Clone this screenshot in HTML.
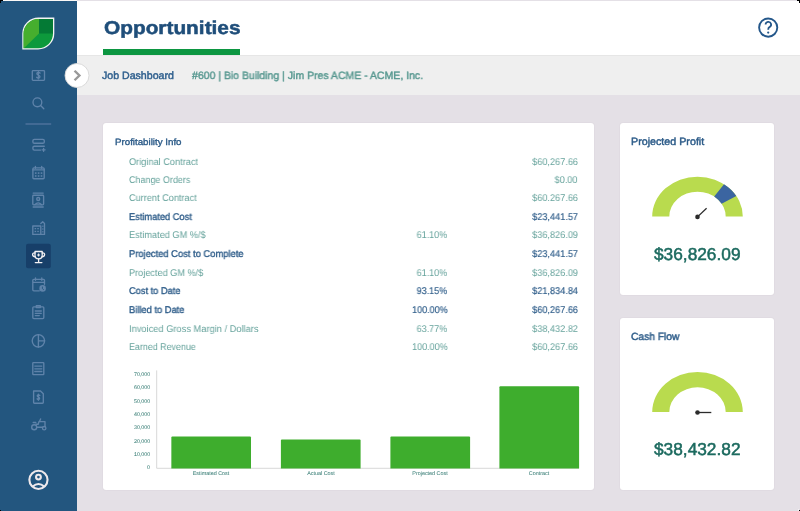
<!DOCTYPE html>
<html><head><meta charset="utf-8">
<style>
*{margin:0;padding:0;box-sizing:border-box}
html,body{width:800px;height:511px;overflow:hidden;background:#e4e0e6;font-family:"Liberation Sans",sans-serif}
.abs{position:absolute}
.t{position:absolute;white-space:nowrap;line-height:1;text-rendering:geometricPrecision;will-change:transform}
.card{position:absolute;background:#fff;border-radius:3px;box-shadow:0 0 1.5px rgba(60,40,70,0.10)}
svg{position:absolute;left:0;top:0;overflow:visible}
</style></head><body>
<!-- top strip -->
<div class="abs" style="left:0;top:0;width:77px;height:1px;background:#fbf9f7"></div>
<!-- sidebar -->
<div class="abs" style="left:0;top:1px;width:77px;height:510px;background:#23567f"></div>
<!-- header -->
<div class="abs" style="left:77px;top:1px;width:723px;height:54px;background:#fff"></div>
<div class="abs" style="left:77px;top:54.6px;width:723px;height:40.9px;background:#efefef"></div>
<div class="abs" style="left:77px;top:54.6px;width:723px;height:1px;background:#e6e6e6"></div>
<div class="abs" style="left:103.2px;top:49.4px;width:137.1px;height:5.4px;background:#0c9641"></div>

<!-- cards -->
<div class="card" style="left:103px;top:122.7px;width:490.7px;height:367.2px"></div>
<div class="card" style="left:620.1px;top:122.7px;width:153.6px;height:172px"></div>
<div class="card" style="left:620.1px;top:318px;width:153.6px;height:171.9px"></div>

<svg width="800" height="511" viewBox="0 0 800 511">
  <!-- logo -->
  <g>
    <path d="M22.3 49.5 V33.5 A16.2 15.9 0 0 1 38.5 17.6 H54.3 V33.6 A16.2 15.9 0 0 1 38.1 49.5 Z" fill="#f4f4f4"/>
    <clipPath id="leaf"><path d="M23.6 48.2 V33.5 A14.9 14.6 0 0 1 38.5 18.9 H53 V33.6 A14.9 14.6 0 0 1 38.1 48.2 Z"/></clipPath>
    <g clip-path="url(#leaf)">
      <rect x="20" y="15" width="40" height="40" fill="#0d993c"/>
      <path d="M20 15 L39 15 L39 33.5 L20 52 Z" fill="#46ae2e"/>
      <rect x="39" y="15" width="20" height="18.5" fill="#047a35"/>
    </g>
  </g>

  <!-- chevron button -->
  <circle cx="77" cy="75.5" r="12" fill="#fff" stroke="#d6d6d6" stroke-width="0.9"/>
  <path d="M75.4 71.6 L79.4 75.5 L75.4 79.4" fill="none" stroke="#999999" stroke-width="2.4" stroke-linecap="square"/>

  <!-- help icon -->
  <circle cx="768.2" cy="27.6" r="9.1" fill="none" stroke="#24578a" stroke-width="1.9"/>
  <path d="M765.6 24.6 A2.75 2.75 0 1 1 769.5 27.1 Q768.2 27.9 768.2 29.7" fill="none" stroke="#24578a" stroke-width="1.8"/>
  <circle cx="768.2" cy="32.6" r="1.1" fill="#24578a"/>

  <!-- sidebar icons -->
  <g fill="none" stroke="#5f83aa" stroke-width="1.35" stroke-linecap="round" stroke-linejoin="round">
    <!-- $ bill -->
    <rect x="32.3" y="70.6" width="12.2" height="9.8" rx="0.8"/>
    <path d="M40.1 73.1 Q39.6 72.4 38.4 72.4 Q36.8 72.5 36.9 73.7 Q37 74.7 38.4 75.2 Q40 75.7 40 76.8 Q39.9 78.1 38.4 78.1 Q37.2 78.1 36.7 77.3 M38.4 71.6 V78.9"/>
    <!-- search -->
    <circle cx="37.4" cy="102.3" r="4.4"/>
    <path d="M40.6 105.5 L43.8 108.7"/>
    <!-- list add -->
    <rect x="32.9" y="139.4" width="11.4" height="3.9" rx="1.4"/>
    <path d="M44.3 146.2 H34.3 Q32.9 146.2 32.9 147.6 V148.6 Q32.9 150.1 34.3 150.1 H40.6 M43.6 148.3 V151.3 M42.1 149.8 H45.1"/>
    <!-- calendar -->
    <rect x="32.9" y="167.9" width="11.3" height="10.9" rx="1"/>
    <path d="M32.9 169.9 H44.2 M35.4 166.4 V168.2 M41.7 166.4 V168.2"/>
  </g>
  <g fill="#5f83aa">
    <rect x="34.9" y="172.3" width="1.6" height="1.6"/><rect x="37.8" y="172.3" width="1.6" height="1.6"/><rect x="40.7" y="172.3" width="1.6" height="1.6"/>
    <rect x="34.9" y="175.2" width="1.6" height="1.6"/><rect x="37.8" y="175.2" width="1.6" height="1.6"/><rect x="40.7" y="175.2" width="1.6" height="1.6"/>
  </g>
  <g fill="none" stroke="#5f83aa" stroke-width="1.35" stroke-linecap="round" stroke-linejoin="round">
    <!-- contact -->
    <path d="M33.2 193.1 H43.2 M33.2 207 H43.2"/>
    <rect x="32.8" y="195.2" width="10.8" height="9.6" rx="0.8"/>
    <circle cx="38.2" cy="199" r="1.5"/>
    <path d="M34.8 204.6 Q38.2 201 41.6 204.6"/>
    <!-- building -->
    <path d="M32.8 226 H40.8 V234.4 H32.8 Z M40.8 223.6 L42.7 221.8 L44.5 223.4 V234.4 H40.8"/>
  </g>
  <g fill="#5f83aa">
    <rect x="34.6" y="228" width="1.5" height="1.3"/><rect x="37.3" y="228" width="1.5" height="1.3"/>
    <rect x="34.6" y="230.8" width="1.5" height="1.3"/><rect x="37.3" y="230.8" width="1.5" height="1.3"/>
    <rect x="42.2" y="225.6" width="1.3" height="1.2"/><rect x="42.2" y="228.4" width="1.3" height="1.2"/><rect x="42.2" y="231.2" width="1.3" height="1.2"/>
  </g>
  <g fill="none" stroke="#5f83aa" stroke-width="1.35" stroke-linecap="round" stroke-linejoin="round">
    <!-- calendar clock -->
    <path d="M39.3 290.8 H33.8 Q32.8 290.8 32.8 289.8 V280.3 Q32.8 279.3 33.8 279.3 H43.5 Q44.5 279.3 44.5 280.3 V284.3 M32.8 282.3 H44.5 M35.5 277.9 V280.3 M41.8 277.9 V280.3"/>
  </g>
  <circle cx="42.6" cy="288.4" r="3.3" fill="#5f83aa"/>
  <path d="M42.4 286.6 V288.6 L43.8 289.8" fill="none" stroke="#23567f" stroke-width="0.9"/>
  <g fill="none" stroke="#5f83aa" stroke-width="1.35" stroke-linecap="round" stroke-linejoin="round">
    <!-- clipboard -->
    <rect x="32.8" y="306.8" width="11" height="11.8" rx="1"/>
    <path d="M36.3 305.6 H40.3 V307.6 H36.3 Z M35.3 311 H41.3 M35.3 313.3 H41.3 M35.3 315.6 H39.3"/>
    <!-- pie -->
    <circle cx="38.4" cy="340.8" r="6.2"/>
    <path d="M38.4 334.6 V347 M38.4 340.8 H44.6"/>
    <!-- receipt list -->
    <rect x="32.8" y="362.6" width="11" height="12" rx="0.6"/>
    <path d="M34.8 366.1 H41.8 M34.8 368.8 H41.8 M34.8 371.5 H41.8"/>
    <!-- doc $ -->
    <path d="M33.6 391 V402.4 Q33.6 403.2 34.4 403.2 H42.5 Q43.3 403.2 43.3 402.4 V393.8 L40.5 391 Z"/>
    <path d="M39.8 395.5 Q39.3 394.9 38.4 394.9 Q37.2 395 37.3 396 Q37.4 396.7 38.4 397.1 Q39.6 397.5 39.6 398.4 Q39.5 399.4 38.4 399.4 Q37.5 399.4 37.1 398.8 M38.4 394.2 V400.2"/>
    <!-- tractor -->
    <circle cx="34.2" cy="427.2" r="2.5"/>
    <circle cx="44.2" cy="428.2" r="1.7"/>
    <path d="M36.7 427.2 H42.5 M36 424.2 H38.3 L38.9 421.6 H45 V426.5 M33.2 422.5 H35.8 M40.6 418.9 L39.6 421.3"/>
  </g>
  <!-- active trophy -->
  <rect x="26" y="243.7" width="24.8" height="24.6" rx="2" fill="#173f69"/>
  <g fill="none" stroke="#f4f1f3" stroke-width="1.3" stroke-linecap="round" stroke-linejoin="round">
    <path d="M35 251.5 H42.2 V255.5 Q42.2 258.8 38.6 258.8 Q35 258.8 35 255.5 Z"/>
    <path d="M35 253 Q32.5 252.6 32.6 254.6 Q32.8 256.6 35.4 256.8 M42.2 253 Q44.7 252.6 44.6 254.6 Q44.4 256.6 41.8 256.8"/>
    <path d="M38.6 258.8 V262.3 M35.3 262.6 H41.9"/>
  </g>
  <path d="M38.6 253.5 V256.5 M37.1 255 H40.1" stroke="#f4f1f3" stroke-width="1"/>
  <!-- user -->
  <g fill="none" stroke="#efe9ec" stroke-width="2.1">
    <circle cx="38.45" cy="479.85" r="9.1"/>
    <circle cx="38.45" cy="477.1" r="2.4"/>
    <path d="M32.6 486.6 Q38.45 481.4 44.3 486.6"/>
  </g>
  <!-- divider -->
  <path d="M25.5 124 H51.2" stroke="#4a709a" stroke-width="1.6"/>

  <!-- chart -->
  <path d="M156.7 370.4 V468.3 H579" fill="none" stroke="#d4d4d4" stroke-width="0.9"/>
  <g fill="#3ead2d">
    <path d="M171.35 468.6 V437.6 Q171.35 436.6 172.35 436.6 H250 Q251 436.6 251 437.6 V468.6 Z"/>
    <path d="M280.9 468.6 V440.4 Q280.9 439.4 281.9 439.4 H359.6 Q360.6 439.4 360.6 440.4 V468.6 Z"/>
    <path d="M390.4 468.6 V437.6 Q390.4 436.6 391.4 436.6 H469.1 Q470.1 436.6 470.1 437.6 V468.6 Z"/>
    <path d="M499.4 468.6 V387.2 Q499.4 386.2 500.4 386.2 H578.1 Q579.1 386.2 579.1 387.2 V468.6 Z"/>
  </g>

  <!-- gauge 1 -->
  <path d="M652.2 216.6 A45.3 40 0 0 1 742.8 216.6 L725.7 216.6 A28.2 24.9 0 0 0 669.3 216.6 Z" fill="#b9db4e"/>
  <path d="M724 184.2 A45.3 40 0 0 1 736.3 196 L721.6 203.8 A28.2 24.9 0 0 0 714.2 196.4 Z" fill="#3b65a1"/>
  <path d="M697.5 216.9 L706.6 208.3" stroke="#2b2b2b" stroke-width="1.3"/>
  <circle cx="697.5" cy="216.9" r="2.3" fill="#2b2b2b"/>
  <!-- gauge 2 -->
  <path d="M652.2 412.1 A45.3 40.2 0 0 1 742.8 412.1 L725.7 412.1 A28.2 24.8 0 0 0 669.3 412.1 Z" fill="#b9db4e"/>
  <path d="M697.5 412.5 L711.3 412.5" stroke="#2b2b2b" stroke-width="1.3"/>
  <circle cx="697.5" cy="412.5" r="2.3" fill="#2b2b2b"/>
</svg>
<div class="abs" style="left:0;top:0;width:3px;height:1px;background:#000"></div>
<div class="abs" style="left:0;top:1px;width:1px;height:2px;background:#000"></div>
<div class="abs" style="left:797px;top:0;width:3px;height:1px;background:#000"></div>
<div class="abs" style="left:799px;top:1px;width:1px;height:2px;background:#000"></div>
<div class="abs" style="left:0;top:510px;width:1px;height:1px;background:#000"></div>
<div class="abs" style="left:798px;top:509px;width:1px;height:2px;background:#f4f2f5"></div>
<div class="abs" style="left:799px;top:510px;width:1px;height:1px;background:#000"></div>
<div class="t" style="left:103.60px;top:19.15px;font-size:18.6px;color:#1f4e7a;font-weight:bold;transform:scaleX(1.120);transform-origin:left top;-webkit-text-stroke:0.5px #1f4e7a;">Opportunities</div>
<div class="t" style="left:101.90px;top:70.62px;font-size:10.6px;color:#30608e;-webkit-text-stroke:0.35px #30608e;-webkit-text-stroke:0.45px #30608e;">Job Dashboard</div>
<div class="t" style="left:191.70px;top:70.82px;font-size:10.6px;color:#55978f;-webkit-text-stroke:0.35px #55978f;transform:scaleX(0.990);transform-origin:left top;-webkit-text-stroke:0.4px #55978f;">#600 | Bio Building | Jim Pres ACME - ACME, Inc.</div>
<div class="t" style="left:114.50px;top:137.70px;font-size:9.1px;color:#2c5b88;-webkit-text-stroke:0.35px #2c5b88;transform:scaleX(1.070);transform-origin:left top;">Profitability Info</div>
<div class="t" style="left:128.80px;top:157.50px;font-size:9.8px;color:#66a39c;transform:scaleX(0.939);transform-origin:left top;">Original Contract</div>
<div class="t" style="right:222.00px;top:157.50px;font-size:9.8px;color:#66a39c;transform:scaleX(0.936);transform-origin:right top;">$60,267.66</div>
<div class="t" style="left:128.80px;top:175.60px;font-size:9.8px;color:#66a39c;transform:scaleX(0.916);transform-origin:left top;">Change Orders</div>
<div class="t" style="right:222.00px;top:175.60px;font-size:9.8px;color:#66a39c;transform:scaleX(0.936);transform-origin:right top;">$0.00</div>
<div class="t" style="left:128.80px;top:193.70px;font-size:9.8px;color:#66a39c;transform:scaleX(0.935);transform-origin:left top;">Current Contract</div>
<div class="t" style="right:222.00px;top:193.70px;font-size:9.8px;color:#66a39c;transform:scaleX(0.936);transform-origin:right top;">$60.267.66</div>
<div class="t" style="left:128.50px;top:212.90px;font-size:9.8px;color:#2c5b88;-webkit-text-stroke:0.35px #2c5b88;transform:scaleX(0.946);transform-origin:left top;">Estimated Cost</div>
<div class="t" style="right:222.00px;top:212.90px;font-size:9.8px;color:#2c5b88;transform:scaleX(0.936);transform-origin:right top;-webkit-text-stroke:0.15px #2c5b88;">$23,441.57</div>
<div class="t" style="left:128.80px;top:231.20px;font-size:9.8px;color:#66a39c;transform:scaleX(0.938);transform-origin:left top;">Estimated GM %/$</div>
<div class="t" style="right:352.80px;top:231.20px;font-size:9.8px;color:#66a39c;transform:scaleX(0.921);transform-origin:right top;">61.10%</div>
<div class="t" style="right:222.00px;top:231.20px;font-size:9.8px;color:#66a39c;transform:scaleX(0.936);transform-origin:right top;">$36,826.09</div>
<div class="t" style="left:128.50px;top:250.40px;font-size:9.8px;color:#2c5b88;-webkit-text-stroke:0.35px #2c5b88;transform:scaleX(0.956);transform-origin:left top;">Projected Cost to Complete</div>
<div class="t" style="right:222.00px;top:250.40px;font-size:9.8px;color:#2c5b88;transform:scaleX(0.936);transform-origin:right top;-webkit-text-stroke:0.15px #2c5b88;">$23,441.57</div>
<div class="t" style="left:128.80px;top:268.50px;font-size:9.8px;color:#66a39c;transform:scaleX(0.935);transform-origin:left top;">Projected GM %/$</div>
<div class="t" style="right:352.80px;top:268.50px;font-size:9.8px;color:#66a39c;transform:scaleX(0.921);transform-origin:right top;">61.10%</div>
<div class="t" style="right:222.00px;top:268.50px;font-size:9.8px;color:#66a39c;transform:scaleX(0.936);transform-origin:right top;">$36,826.09</div>
<div class="t" style="left:128.50px;top:287.40px;font-size:9.8px;color:#2c5b88;-webkit-text-stroke:0.35px #2c5b88;transform:scaleX(0.946);transform-origin:left top;">Cost to Date</div>
<div class="t" style="right:352.80px;top:287.40px;font-size:9.8px;color:#2c5b88;transform:scaleX(0.921);transform-origin:right top;-webkit-text-stroke:0.15px #2c5b88;">93.15%</div>
<div class="t" style="right:222.00px;top:287.40px;font-size:9.8px;color:#2c5b88;transform:scaleX(0.936);transform-origin:right top;-webkit-text-stroke:0.15px #2c5b88;">$21,834.84</div>
<div class="t" style="left:128.50px;top:305.70px;font-size:9.8px;color:#2c5b88;-webkit-text-stroke:0.35px #2c5b88;transform:scaleX(0.951);transform-origin:left top;">Billed to Date</div>
<div class="t" style="right:352.80px;top:305.70px;font-size:9.8px;color:#2c5b88;transform:scaleX(0.921);transform-origin:right top;-webkit-text-stroke:0.15px #2c5b88;">100.00%</div>
<div class="t" style="right:222.00px;top:305.70px;font-size:9.8px;color:#2c5b88;transform:scaleX(0.936);transform-origin:right top;-webkit-text-stroke:0.15px #2c5b88;">$60,267.66</div>
<div class="t" style="left:128.80px;top:325.10px;font-size:9.8px;color:#66a39c;transform:scaleX(0.948);transform-origin:left top;">Invoiced Gross Margin / Dollars</div>
<div class="t" style="right:352.80px;top:325.10px;font-size:9.8px;color:#66a39c;transform:scaleX(0.921);transform-origin:right top;">63.77%</div>
<div class="t" style="right:222.00px;top:325.10px;font-size:9.8px;color:#66a39c;transform:scaleX(0.936);transform-origin:right top;">$38,432.82</div>
<div class="t" style="left:128.80px;top:343.40px;font-size:9.8px;color:#66a39c;transform:scaleX(0.908);transform-origin:left top;">Earned Revenue</div>
<div class="t" style="right:352.80px;top:343.40px;font-size:9.8px;color:#66a39c;transform:scaleX(0.921);transform-origin:right top;">100.00%</div>
<div class="t" style="right:222.00px;top:343.40px;font-size:9.8px;color:#66a39c;transform:scaleX(0.936);transform-origin:right top;">$60,267.66</div>
<div class="t" style="left:630.90px;top:136.71px;font-size:10.5px;color:#2c5b88;-webkit-text-stroke:0.35px #2c5b88;transform:scaleX(1.020);transform-origin:left top;-webkit-text-stroke:0.45px #2c5b88;">Projected Profit</div>
<div class="t" style="left:630.70px;top:332.21px;font-size:10.5px;color:#2c5b88;-webkit-text-stroke:0.35px #2c5b88;transform:scaleX(0.975);transform-origin:left top;-webkit-text-stroke:0.45px #2c5b88;">Cash Flow</div>
<div class="t" style="left:653.80px;top:246.45px;font-size:17.3px;color:#1c6a5f;-webkit-text-stroke:0.5px #1c6a5f;">$36,826.09</div>
<div class="t" style="left:653.80px;top:441.45px;font-size:17.3px;color:#1c6a5f;-webkit-text-stroke:0.5px #1c6a5f;">$38,432.82</div>
<div class="t" style="right:649.60px;top:373.01px;font-size:5.3px;color:#3f817a;-webkit-text-stroke:0.05px #3f817a;">70,000</div>
<div class="t" style="right:649.60px;top:386.32px;font-size:5.3px;color:#3f817a;-webkit-text-stroke:0.05px #3f817a;">60,000</div>
<div class="t" style="right:649.60px;top:399.63px;font-size:5.3px;color:#3f817a;-webkit-text-stroke:0.05px #3f817a;">50,000</div>
<div class="t" style="right:649.60px;top:412.94px;font-size:5.3px;color:#3f817a;-webkit-text-stroke:0.05px #3f817a;">40,000</div>
<div class="t" style="right:649.60px;top:426.25px;font-size:5.3px;color:#3f817a;-webkit-text-stroke:0.05px #3f817a;">30,000</div>
<div class="t" style="right:649.60px;top:439.56px;font-size:5.3px;color:#3f817a;-webkit-text-stroke:0.05px #3f817a;">20,000</div>
<div class="t" style="right:649.60px;top:452.87px;font-size:5.3px;color:#3f817a;-webkit-text-stroke:0.05px #3f817a;">10,000</div>
<div class="t" style="right:649.60px;top:466.18px;font-size:5.3px;color:#3f817a;-webkit-text-stroke:0.05px #3f817a;">0</div>
<div class="t" style="left:211.20px;top:472.23px;font-size:5.4px;color:#3f817a;transform:translateX(-50%) scaleX(1.000);transform-origin:left top;-webkit-text-stroke:0.05px #3f817a;">Estimated Cost</div>
<div class="t" style="left:320.75px;top:472.23px;font-size:5.4px;color:#3f817a;transform:translateX(-50%) scaleX(1.000);transform-origin:left top;-webkit-text-stroke:0.05px #3f817a;">Actual Cost</div>
<div class="t" style="left:430.25px;top:472.23px;font-size:5.4px;color:#3f817a;transform:translateX(-50%) scaleX(1.000);transform-origin:left top;-webkit-text-stroke:0.05px #3f817a;">Projected Cost</div>
<div class="t" style="left:539.25px;top:472.23px;font-size:5.4px;color:#3f817a;transform:translateX(-50%) scaleX(1.000);transform-origin:left top;-webkit-text-stroke:0.05px #3f817a;">Contract</div>
</body></html>
